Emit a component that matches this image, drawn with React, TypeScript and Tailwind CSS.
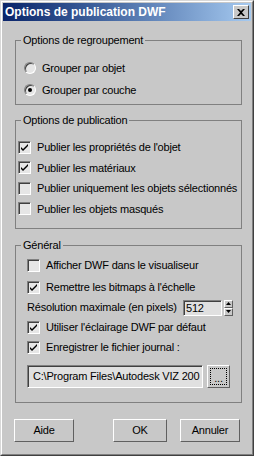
import React from "react";

const font = { fontFamily: '"Liberation Sans", Arial, sans-serif' };

function Radio({ checked }: { checked?: boolean }) {
  return (
    <div className="w-[12px] h-[12px] rounded-full border border-t-[#808080] border-l-[#808080] border-b-white border-r-white bg-[#e6e6e6] flex items-center justify-center shadow-[inset_1px_1px_0_#404040]">
      {checked && <div className="w-[4px] h-[4px] rounded-full bg-black" />}
    </div>
  );
}

function Check({ checked }: { checked?: boolean }) {
  return (
    <div className="w-[13px] h-[13px] shrink-0 border border-t-[#808080] border-l-[#808080] border-b-white border-r-white bg-[#e6e6e6] shadow-[inset_1px_1px_0_#404040] flex items-center justify-center">
      {checked && (
        <svg width="9" height="9" viewBox="0 0 9 9">
          <path d="M1 4 L3 6 L8 1 L8 3 L3 8 L1 6 Z" fill="#000" />
        </svg>
      )}
    </div>
  );
}

function Group({ title, className, children }: { title: string; className: string; children: React.ReactNode }) {
  return (
    <div className={`relative ml-[12px] w-[227px] border border-[#808080] ${className}`}>
      <span className="absolute left-[5px] top-[-8px] bg-[#c8c8c8] px-[2px] leading-[14px] text-[11px] text-black">
        {title}
      </span>
      {children}
    </div>
  );
}

function Btn({ label, className }: { label: string; className: string }) {
  return (
    <div className={`h-[23px] flex items-center justify-center border border-t-white border-l-white border-b-[#606060] border-r-[#606060] text-[11px] text-black ${className}`}>
      {label}
    </div>
  );
}

export default function App() {
  return (
    <div
      className="w-[254px] h-[456px] bg-[#c8c8c8] border border-t-[#d8d8d8] border-l-[#d8d8d8] border-b-[#404040] border-r-[#404040] tracking-[-0.2px]"
      style={font}
    >
      <div className="w-full h-full border border-t-white border-l-white border-b-[#808080] border-r-[#808080] p-[1px] flex flex-col">
        {/* title bar */}
        <div className="h-[18px] shrink-0 flex items-center justify-between pl-[2px] pr-[2px] bg-gradient-to-r from-[#0a246a] to-[#a6caf0] tracking-normal">
          <span className="text-white font-bold text-[12px] leading-none">Options de publication DWF</span>
          <div className="w-[16px] h-[14px] bg-[#c8c8c8] border border-t-white border-l-white border-b-[#404040] border-r-[#404040] flex items-center justify-center">
            <svg width="8" height="7" viewBox="0 0 8 7">
              <path d="M0 0 L2 0 L4 2 L6 0 L8 0 L5 3.5 L8 7 L6 7 L4 5 L2 7 L0 7 L3 3.5 Z" fill="#000" />
            </svg>
          </div>
        </div>

        <Group title="Options de regroupement" className="mt-[19px] h-[65px] pt-[16px] flex flex-col">
          <div className="h-[22px] flex items-center pl-[8px] gap-[6px] text-[11px] text-black">
            <Radio /> Grouper par objet
          </div>
          <div className="h-[22px] flex items-center pl-[8px] gap-[6px] text-[11px] text-black">
            <Radio checked /> Grouper par couche
          </div>
        </Group>

        <Group title="Options de publication" className="mt-[15px] h-[109px] pt-[16px] flex flex-col">
          {[
            ["Publier les propriétés de l'objet", true],
            ["Publier les matériaux", true],
            ["Publier uniquement les objets sélectionnés", false],
            ["Publier les objets masqués", false],
          ].map(([t, c]) => (
            <div key={t as string} className="h-[20.5px] flex items-center pl-[2px] gap-[6px] text-[11px] text-black whitespace-nowrap">
              <Check checked={c as boolean} /> {t as string}
            </div>
          ))}
        </Group>

        <Group title="Général" className="mt-[16px] h-[158px] pt-[9px] flex flex-col">
          <div className="h-[21px] flex items-center pl-[11px] gap-[6px] text-[11px] text-black">
            <Check /> Afficher DWF dans le visualiseur
          </div>
          <div className="h-[22px] flex items-center pl-[11px] gap-[6px] text-[11px] text-black">
            <Check checked /> Remettre les bitmaps à l'échelle
          </div>
          <div className="h-[19px] flex items-center pl-[11px] text-[11px] text-black">
            <span className="w-[156px]">Résolution maximale (en pixels)</span>
            <div className="w-[39px] h-[16px] border border-t-[#808080] border-l-[#808080] border-b-white border-r-white bg-[#e0e0e0] shadow-[inset_1px_1px_0_#404040] pl-[2px] leading-[14px]">
              512
            </div>
            <div className="ml-[2px] w-[9px] h-[16px] flex flex-col">
              <div className="h-[8px] border border-t-white border-l-white border-b-[#606060] border-r-[#606060] flex items-center justify-center">
                <svg width="5" height="3" viewBox="0 0 5 3"><path d="M2.5 0 L5 3 L0 3 Z" fill="#000" /></svg>
              </div>
              <div className="h-[8px] border border-t-white border-l-white border-b-[#606060] border-r-[#606060] flex items-center justify-center">
                <svg width="5" height="3" viewBox="0 0 5 3"><path d="M0 0 L5 0 L2.5 3 Z" fill="#000" /></svg>
              </div>
            </div>
          </div>
          <div className="h-[21px] flex items-center pl-[11px] gap-[6px] text-[11px] text-black">
            <Check checked /> Utiliser l'éclairage DWF par défaut
          </div>
          <div className="h-[19px] flex items-center pl-[11px] gap-[6px] text-[11px] text-black">
            <Check checked /> Enregistrer le fichier journal :
          </div>
          <div className="mt-[8px] flex items-center pl-[11px]">
            <div className="w-[176px] h-[23px] border border-t-[#808080] border-l-[#808080] border-b-white border-r-white bg-[#e0e0e0] shadow-[inset_1px_1px_0_#404040] pl-[5px] flex items-center overflow-hidden whitespace-nowrap text-[11px] text-black">
              C:\Program Files\Autodesk VIZ 200
            </div>
            <div className="ml-[4px] w-[23px] h-[23px] border border-t-white border-l-white border-b-[#606060] border-r-[#606060] p-[2px]">
              <div className="w-full h-full border border-dotted border-black flex items-end justify-center text-[11px] leading-[12px] text-black">
                ...
              </div>
            </div>
          </div>
        </Group>

        <div className="mt-[16px] flex">
          <Btn label="Aide" className="ml-[11px] w-[60px]" />
          <Btn label="OK" className="ml-[39px] w-[54px]" />
          <Btn label="Annuler" className="ml-[13px] w-[60px]" />
        </div>
      </div>
    </div>
  );
}
